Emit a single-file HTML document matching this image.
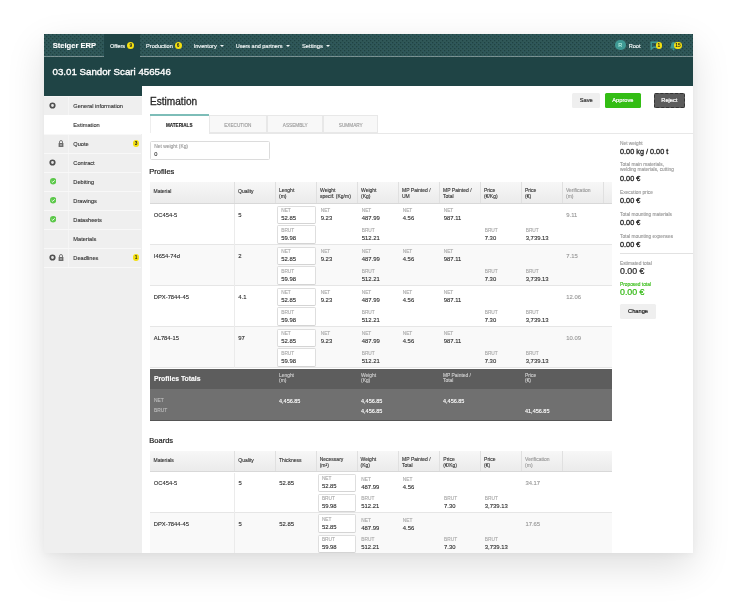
<!DOCTYPE html>
<html><head><meta charset="utf-8"><style>
html,body{margin:0;padding:0;}
body{width:738px;height:608px;overflow:hidden;background:#fff;position:relative;font-family:"Liberation Sans",sans-serif;}
.shadow{position:absolute;left:44px;top:34px;width:649px;height:519px;background:#fff;box-shadow:0 14px 36px rgba(0,0,0,0.13),0 2px 8px rgba(0,0,0,0.04);}
.app{will-change:transform;position:absolute;left:44px;top:34px;width:649px;height:519px;overflow:hidden;background:#efefef;}
.t{position:absolute;white-space:nowrap;-webkit-text-stroke:0.12px currentColor;}
.r{position:absolute;}
.bd{position:absolute;height:7px;border-radius:3.5px;background:#f4e010;color:#222;font-size:4.8px;display:flex;align-items:center;justify-content:center;font-weight:bold;}
.btn{position:absolute;-webkit-text-stroke:0.2px currentColor;border-radius:1.5px;font-size:5.7px;text-align:center;line-height:14.8px;}
</style></head><body>
<div class="shadow"></div>
<div class="app">
<svg class="r" style="left:0;top:0" width="649" height="22.6"><defs><pattern id="dp" width="4" height="4" patternUnits="userSpaceOnUse"><rect width="4" height="4" fill="#305858"/><rect x="0" y="0" width="1.3" height="1.3" fill="#1f4243"/><rect x="2" y="2" width="1.3" height="1.3" fill="#1f4243"/><rect x="3" y="1" width="0.6" height="0.6" fill="#2a5570"/></pattern></defs><rect width="649" height="22.6" fill="url(#dp)"/></svg>
<div class="r" style="left:60.30px;top:0.00px;width:35.30px;height:22.60px;background:#1f4445;"></div>
<div class="t" style="left:8.70px;top:7.44px;font-size:7.6px;line-height:9.12px;color:#fff;font-weight:bold;">Steiger ERP</div>
<div class="t" style="left:66.00px;top:8.94px;font-size:5.6px;line-height:6.72px;color:#f4f8f8;font-weight:normal;-webkit-text-stroke:0.15px #f4f8f8;">Offers</div>
<div class="bd" style="left:83.40px;top:8.10px;width:7px;height:7px;border-radius:3.5px;">9</div>
<div class="t" style="left:102.10px;top:8.94px;font-size:5.6px;line-height:6.72px;color:#f4f8f8;font-weight:normal;-webkit-text-stroke:0.15px #f4f8f8;">Production</div>
<div class="bd" style="left:130.70px;top:8.10px;width:7px;height:7px;border-radius:3.5px;">6</div>
<div class="t" style="left:149.70px;top:8.94px;font-size:5.6px;line-height:6.72px;color:#f4f8f8;font-weight:normal;-webkit-text-stroke:0.15px #f4f8f8;">Inventory</div>
<div class="r" style="left:175.90px;top:11.00px;width:0;height:0;border-left:2.1px solid transparent;border-right:2.1px solid transparent;border-top:2.3px solid #f4f8f8;"></div>
<div class="t" style="left:191.70px;top:9.00px;font-size:5.5px;line-height:6.60px;color:#f4f8f8;font-weight:normal;-webkit-text-stroke:0.15px #f4f8f8;">Users and partners</div>
<div class="r" style="left:242.40px;top:11.00px;width:0;height:0;border-left:2.1px solid transparent;border-right:2.1px solid transparent;border-top:2.3px solid #f4f8f8;"></div>
<div class="t" style="left:258.00px;top:8.85px;font-size:5.75px;line-height:6.90px;color:#f4f8f8;font-weight:normal;-webkit-text-stroke:0.15px #f4f8f8;">Settings</div>
<div class="r" style="left:281.70px;top:11.00px;width:0;height:0;border-left:2.1px solid transparent;border-right:2.1px solid transparent;border-top:2.3px solid #f4f8f8;"></div>
<div class="r" style="left:570.90px;top:5.70px;width:10.8px;height:10.8px;border-radius:50%;background:#3f9994;color:#cfe;font-size:5.5px;line-height:10.8px;text-align:center;">R</div>
<div class="t" style="left:584.70px;top:8.54px;font-size:5.6px;line-height:6.72px;color:#f4f8f8;font-weight:normal;-webkit-text-stroke:0.15px #f4f8f8;">Root</div>
<svg class="r" style="left:606px;top:7.200000000000003px" width="9" height="9" viewBox="0 0 9 9"><path d="M1.2 1.2 H7.5 V6.2 H3 L1.2 8.2 Z" fill="none" stroke="#3f9994" stroke-width="1.5"/></svg>
<div class="bd" style="left:611.60px;top:8.30px;width:6.6px;height:6.6px;border-radius:3.3px;">1</div>
<svg class="r" style="left:624.5px;top:6.5px" width="9" height="10" viewBox="0 0 9 10"><path d="M4.5 1 C2.5 1 2 3 2 5 L1 7.5 H8 L7 5 C7 3 6.5 1 4.5 1 Z" fill="#3f9994"/><circle cx="4.5" cy="8.5" r="1" fill="#3f9994"/></svg>
<div class="bd" style="left:629.80px;top:8.20px;width:8.2px;height:6.8px;border-radius:3.4px;">15</div>
<div class="r" style="left:0.00px;top:22.60px;width:649.00px;height:39.40px;background:#1f4445;"></div>
<div class="t" style="left:8.50px;top:31.56px;font-size:9.73px;line-height:11.68px;color:#fff;font-weight:normal;-webkit-text-stroke:0.35px #fff;">03.01 Sandor Scari 456546</div>
<div class="r" style="left:0.00px;top:62.00px;width:97.80px;height:457.00px;background:#efefef;"></div>
<div class="r" style="left:0.00px;top:61.80px;width:97.80px;height:1.00px;background:#f6f6f6;"></div>
<div class="r" style="left:24.20px;top:62.00px;width:0.80px;height:172.00px;background:#f5f5f5;"></div>
<div class="r" style="left:0.00px;top:80.77px;width:97.00px;height:1.00px;background:#f8f8f8;"></div>
<div class="t" style="left:29.30px;top:69.19px;font-size:5.66px;line-height:6.79px;color:#333;font-weight:normal;">General information</div>
<svg class="r" style="left:5.30px;top:68.19px" width="7" height="7" viewBox="0 0 7 7"><circle cx="3.5" cy="3.5" r="2.25" fill="#e8e8e8" stroke="#505050" stroke-width="1.7"/></svg>
<div class="r" style="left:0.00px;top:81.27px;width:97.80px;height:18.97px;background:#fff;"></div>
<div class="r" style="left:0.00px;top:99.74px;width:97.00px;height:1.00px;background:#f8f8f8;"></div>
<div class="t" style="left:29.30px;top:88.16px;font-size:5.66px;line-height:6.79px;color:#333;font-weight:normal;">Estimation</div>
<div class="r" style="left:0.00px;top:118.71px;width:97.00px;height:1.00px;background:#f8f8f8;"></div>
<div class="t" style="left:29.30px;top:107.13px;font-size:5.66px;line-height:6.79px;color:#333;font-weight:normal;">Quote</div>
<svg class="r" style="left:14.40px;top:105.83px" width="6" height="7" viewBox="0 0 6 7"><rect x="0.6" y="3" width="4.8" height="4" fill="#6c6c6c"/><path d="M1.5 3 V2 A1.5 1.5 0 0 1 4.5 2 V3" fill="none" stroke="#6c6c6c" stroke-width="0.9"/><rect x="2.5" y="4.2" width="1" height="1.5" fill="#eee"/></svg>
<div class="bd" style="left:88.75px;top:106.38px;width:6.5px;height:6.5px;border-radius:3.25px;">3</div>
<div class="r" style="left:0.00px;top:137.68px;width:97.00px;height:1.00px;background:#f8f8f8;"></div>
<div class="t" style="left:29.30px;top:126.10px;font-size:5.66px;line-height:6.79px;color:#333;font-weight:normal;">Contract</div>
<svg class="r" style="left:5.30px;top:125.09px" width="7" height="7" viewBox="0 0 7 7"><circle cx="3.5" cy="3.5" r="2.25" fill="#e8e8e8" stroke="#505050" stroke-width="1.7"/></svg>
<div class="r" style="left:0.00px;top:156.65px;width:97.00px;height:1.00px;background:#f8f8f8;"></div>
<div class="t" style="left:29.30px;top:145.07px;font-size:5.66px;line-height:6.79px;color:#333;font-weight:normal;">Debiting</div>
<svg class="r" style="left:5.80px;top:144.37px" width="6.4" height="6.4" viewBox="0 0 10 10"><circle cx="5" cy="5" r="5" fill="#5cc84a"/><path d="M2.6 5.2 L4.3 6.8 L7.4 3.6" fill="none" stroke="#fff" stroke-width="1.4"/></svg>
<div class="r" style="left:0.00px;top:175.62px;width:97.00px;height:1.00px;background:#f8f8f8;"></div>
<div class="t" style="left:29.30px;top:164.04px;font-size:5.66px;line-height:6.79px;color:#333;font-weight:normal;">Drawings</div>
<svg class="r" style="left:5.80px;top:163.34px" width="6.4" height="6.4" viewBox="0 0 10 10"><circle cx="5" cy="5" r="5" fill="#5cc84a"/><path d="M2.6 5.2 L4.3 6.8 L7.4 3.6" fill="none" stroke="#fff" stroke-width="1.4"/></svg>
<div class="r" style="left:0.00px;top:194.59px;width:97.00px;height:1.00px;background:#f8f8f8;"></div>
<div class="t" style="left:29.30px;top:183.01px;font-size:5.66px;line-height:6.79px;color:#333;font-weight:normal;">Datasheets</div>
<svg class="r" style="left:5.80px;top:182.31px" width="6.4" height="6.4" viewBox="0 0 10 10"><circle cx="5" cy="5" r="5" fill="#5cc84a"/><path d="M2.6 5.2 L4.3 6.8 L7.4 3.6" fill="none" stroke="#fff" stroke-width="1.4"/></svg>
<div class="r" style="left:0.00px;top:213.56px;width:97.00px;height:1.00px;background:#f8f8f8;"></div>
<div class="t" style="left:29.30px;top:201.98px;font-size:5.66px;line-height:6.79px;color:#333;font-weight:normal;">Materials</div>
<div class="r" style="left:0.00px;top:232.53px;width:97.00px;height:1.00px;background:#f8f8f8;"></div>
<div class="t" style="left:29.30px;top:220.95px;font-size:5.66px;line-height:6.79px;color:#333;font-weight:normal;">Deadlines</div>
<svg class="r" style="left:5.30px;top:219.94px" width="7" height="7" viewBox="0 0 7 7"><circle cx="3.5" cy="3.5" r="2.25" fill="#e8e8e8" stroke="#505050" stroke-width="1.7"/></svg>
<svg class="r" style="left:14.40px;top:219.64px" width="6" height="7" viewBox="0 0 6 7"><rect x="0.6" y="3" width="4.8" height="4" fill="#6c6c6c"/><path d="M1.5 3 V2 A1.5 1.5 0 0 1 4.5 2 V3" fill="none" stroke="#6c6c6c" stroke-width="0.9"/><rect x="2.5" y="4.2" width="1" height="1.5" fill="#eee"/></svg>
<div class="bd" style="left:88.75px;top:220.19px;width:6.5px;height:6.5px;border-radius:3.25px;">1</div>
<div class="r" style="left:97.80px;top:51.90px;width:551.20px;height:467.10px;background:#fff;"></div>
<div class="t" style="left:106.00px;top:61.74px;font-size:10.1px;line-height:12.12px;color:#2a2a2a;font-weight:normal;-webkit-text-stroke:0.3px #2a2a2a;">Estimation</div>
<div class="btn" style="left:528.3px;top:58.900000000000006px;width:28px;height:14.8px;background:#efefef;color:#333;">Save</div>
<div class="btn" style="left:560.6px;top:58.900000000000006px;width:36.6px;height:14.8px;background:#33bd14;color:#fff;">Approve</div>
<div class="btn" style="left:609.5px;top:58.900000000000006px;width:31.7px;height:14.8px;background:#5c5c5c;color:#fff;box-sizing:border-box;border:0.7px dashed #333;line-height:13.4px;">Reject</div>
<div class="r" style="left:164.50px;top:98.60px;width:484.50px;height:0.70px;background:#e8e8e8;"></div>
<div class="r" style="left:106.00px;top:81.00px;width:0.60px;height:18.00px;background:#eee;"></div>
<div class="r" style="left:106.00px;top:80.20px;width:58.50px;height:1.70px;background:#7dbdb8;"></div>
<div class="t" style="left:106px;top:88.5px;width:58.5px;text-align:center;font-size:4.6px;line-height:6px;font-weight:bold;color:#222;">MATERIALS</div>
<div class="r" style="left:164.50px;top:80.80px;width:58.70px;height:18.20px;background:#f8f8f8;border:0.6px solid #e8e8e8;box-sizing:border-box;"></div>
<div class="t" style="left:164.5px;top:88.5px;width:58.69999999999999px;text-align:center;font-size:4.7px;line-height:6px;color:#9a9a9a;">EXECUTION</div>
<div class="r" style="left:223.20px;top:80.80px;width:56.10px;height:18.20px;background:#f8f8f8;border:0.6px solid #e8e8e8;box-sizing:border-box;"></div>
<div class="t" style="left:223.2px;top:88.5px;width:56.10000000000002px;text-align:center;font-size:4.7px;line-height:6px;color:#9a9a9a;">ASSEMBLY</div>
<div class="r" style="left:279.30px;top:80.80px;width:55.00px;height:18.20px;background:#f8f8f8;border:0.6px solid #e8e8e8;box-sizing:border-box;"></div>
<div class="t" style="left:279.3px;top:88.5px;width:55.0px;text-align:center;font-size:4.7px;line-height:6px;color:#9a9a9a;">SUMMARY</div>
<div class="r" style="left:106.00px;top:107.40px;width:120.00px;height:19.00px;border:0.8px solid #dcdcdc;border-radius:1.5px;box-sizing:border-box;"></div>
<div class="t" style="left:110.30px;top:110.26px;font-size:4.9px;line-height:5.88px;color:#999;font-weight:normal;">Net weight (Kg)</div>
<div class="t" style="left:110.30px;top:117.18px;font-size:5.7px;line-height:6.84px;color:#333;font-weight:normal;">0</div>
<div class="t" style="left:576.00px;top:106.72px;font-size:4.8px;line-height:5.76px;color:#999;font-weight:normal;">Net weight</div>
<div class="t" style="left:576.00px;top:114.12px;font-size:7.3px;line-height:8.76px;color:#222;font-weight:normal;-webkit-text-stroke:0.3px currentColor;">0.00 kg / 0.00 t</div>
<div class="t" style="left:576.00px;top:127.92px;font-size:4.8px;line-height:5.76px;color:#999;font-weight:normal;">Total main materials,</div>
<div class="t" style="left:576.00px;top:133.32px;font-size:4.8px;line-height:5.76px;color:#999;font-weight:normal;">welding materials, cutting</div>
<div class="t" style="left:576.00px;top:140.72px;font-size:7.3px;line-height:8.76px;color:#222;font-weight:normal;-webkit-text-stroke:0.3px currentColor;">0.00 €</div>
<div class="t" style="left:576.00px;top:155.92px;font-size:4.8px;line-height:5.76px;color:#999;font-weight:normal;">Execution price</div>
<div class="t" style="left:576.00px;top:163.02px;font-size:7.3px;line-height:8.76px;color:#222;font-weight:normal;-webkit-text-stroke:0.3px currentColor;">0.00 €</div>
<div class="t" style="left:576.00px;top:177.72px;font-size:4.8px;line-height:5.76px;color:#999;font-weight:normal;">Total mounting materials</div>
<div class="t" style="left:576.00px;top:185.22px;font-size:7.3px;line-height:8.76px;color:#222;font-weight:normal;-webkit-text-stroke:0.3px currentColor;">0.00 €</div>
<div class="t" style="left:576.00px;top:200.12px;font-size:4.8px;line-height:5.76px;color:#999;font-weight:normal;">Total mounting expenses</div>
<div class="t" style="left:576.00px;top:207.22px;font-size:7.3px;line-height:8.76px;color:#222;font-weight:normal;-webkit-text-stroke:0.3px currentColor;">0.00 €</div>
<div class="r" style="left:576.00px;top:219.10px;width:73.00px;height:1.30px;background:#e2e2e2;"></div>
<div class="t" style="left:576.00px;top:226.62px;font-size:4.8px;line-height:5.76px;color:#999;font-weight:normal;">Estimated total</div>
<div class="t" style="left:576.00px;top:232.02px;font-size:8.8px;line-height:10.56px;color:#222;font-weight:normal;-webkit-text-stroke:0.2px #222;">0.00 €</div>
<div class="t" style="left:576.00px;top:247.62px;font-size:4.8px;line-height:5.76px;color:#33bb11;font-weight:normal;">Proposed total</div>
<div class="t" style="left:576.00px;top:253.32px;font-size:8.8px;line-height:10.56px;color:#2fb80f;font-weight:normal;-webkit-text-stroke:0.2px #2fb80f;">0.00 €</div>
<div class="btn" style="left:576px;top:269.9px;width:36px;height:14.8px;background:#efefef;color:#222;">Change</div>
<div class="t" style="left:105.30px;top:133.00px;font-size:7.5px;line-height:9.00px;color:#222;font-weight:normal;-webkit-text-stroke:0.2px #222;">Profiles</div>
<div class="r" style="left:106.00px;top:148.40px;width:462.20px;height:21.80px;background:linear-gradient(#f7f7f7,#ebebeb);border-bottom:1.2px solid #d8d8d8;box-sizing:border-box;"></div>
<div class="t" style="left:109.50px;top:153.80px;font-size:5.0px;line-height:6.00px;color:#333;font-weight:normal;">Material</div>
<div class="r" style="left:190.10px;top:148.40px;width:0.80px;height:20.80px;background:#e0e0e0;"></div>
<div class="t" style="left:194.00px;top:153.80px;font-size:5.0px;line-height:6.00px;color:#333;font-weight:normal;">Quality</div>
<div class="r" style="left:231.10px;top:148.40px;width:0.80px;height:20.80px;background:#e0e0e0;"></div>
<div class="t" style="left:235.00px;top:153.40px;font-size:5.0px;line-height:6.00px;color:#333;font-weight:normal;">Lenght</div>
<div class="t" style="left:235.00px;top:159.20px;font-size:5.0px;line-height:6.00px;color:#333;font-weight:normal;">(m)</div>
<div class="r" style="left:272.10px;top:148.40px;width:0.80px;height:20.80px;background:#e0e0e0;"></div>
<div class="t" style="left:276.00px;top:153.40px;font-size:5.0px;line-height:6.00px;color:#333;font-weight:normal;">Weight</div>
<div class="t" style="left:276.00px;top:159.20px;font-size:5.0px;line-height:6.00px;color:#333;font-weight:normal;">specif. (Kg/m)</div>
<div class="r" style="left:313.10px;top:148.40px;width:0.80px;height:20.80px;background:#e0e0e0;"></div>
<div class="t" style="left:317.00px;top:153.40px;font-size:5.0px;line-height:6.00px;color:#333;font-weight:normal;">Weight</div>
<div class="t" style="left:317.00px;top:159.20px;font-size:5.0px;line-height:6.00px;color:#333;font-weight:normal;">(Kg)</div>
<div class="r" style="left:354.10px;top:148.40px;width:0.80px;height:20.80px;background:#e0e0e0;"></div>
<div class="t" style="left:358.00px;top:153.40px;font-size:5.0px;line-height:6.00px;color:#333;font-weight:normal;">MP Painted /</div>
<div class="t" style="left:358.00px;top:159.20px;font-size:5.0px;line-height:6.00px;color:#333;font-weight:normal;">UM</div>
<div class="r" style="left:395.10px;top:148.40px;width:0.80px;height:20.80px;background:#e0e0e0;"></div>
<div class="t" style="left:399.00px;top:153.40px;font-size:5.0px;line-height:6.00px;color:#333;font-weight:normal;">MP Painted /</div>
<div class="t" style="left:399.00px;top:159.20px;font-size:5.0px;line-height:6.00px;color:#333;font-weight:normal;">Total</div>
<div class="r" style="left:436.10px;top:148.40px;width:0.80px;height:20.80px;background:#e0e0e0;"></div>
<div class="t" style="left:440.00px;top:153.40px;font-size:5.0px;line-height:6.00px;color:#333;font-weight:normal;">Price</div>
<div class="t" style="left:440.00px;top:159.20px;font-size:5.0px;line-height:6.00px;color:#333;font-weight:normal;">(€/Kg)</div>
<div class="r" style="left:477.10px;top:148.40px;width:0.80px;height:20.80px;background:#e0e0e0;"></div>
<div class="t" style="left:481.00px;top:153.40px;font-size:5.0px;line-height:6.00px;color:#333;font-weight:normal;">Price</div>
<div class="t" style="left:481.00px;top:159.20px;font-size:5.0px;line-height:6.00px;color:#333;font-weight:normal;">(€)</div>
<div class="r" style="left:518.10px;top:148.40px;width:0.80px;height:20.80px;background:#e0e0e0;"></div>
<div class="t" style="left:522.00px;top:153.40px;font-size:5.0px;line-height:6.00px;color:#999;font-weight:normal;">Verification</div>
<div class="t" style="left:522.00px;top:159.20px;font-size:5.0px;line-height:6.00px;color:#999;font-weight:normal;">(m)</div>
<div class="r" style="left:559.10px;top:148.40px;width:0.80px;height:20.80px;background:#e0e0e0;"></div>
<div class="t" style="left:563.00px;top:153.80px;font-size:5.0px;line-height:6.00px;color:#333;font-weight:normal;"></div>
<div class="r" style="left:106.00px;top:170.20px;width:462.20px;height:41.00px;background:#fff;border-bottom:0.8px solid #e6e6e6;box-sizing:border-box;"></div>
<div class="r" style="left:190.15px;top:170.20px;width:0.70px;height:41.00px;background:#ebebeb;"></div>
<div class="t" style="left:109.80px;top:178.22px;font-size:5.8px;line-height:6.96px;color:#303030;font-weight:normal;">OC454-5</div>
<div class="t" style="left:194.30px;top:178.16px;font-size:5.9px;line-height:7.08px;color:#303030;font-weight:normal;">5</div>
<div class="r" style="left:232.80px;top:171.50px;width:38.80px;height:18.30px;background:#fff;border:0.8px solid #dedede;border-bottom-color:#d4d4d4;border-radius:1.8px;box-sizing:border-box;"></div>
<div class="r" style="left:232.80px;top:191.20px;width:38.80px;height:18.60px;background:#fff;border:0.8px solid #dedede;border-bottom-color:#d4d4d4;border-radius:1.8px;box-sizing:border-box;"></div>
<div class="t" style="left:237.20px;top:173.92px;font-size:4.8px;line-height:5.76px;color:#aaa;font-weight:normal;">NET</div>
<div class="t" style="left:237.20px;top:180.96px;font-size:5.9px;line-height:7.08px;color:#303030;font-weight:normal;">52.85</div>
<div class="t" style="left:237.20px;top:193.62px;font-size:4.8px;line-height:5.76px;color:#aaa;font-weight:normal;">BRUT</div>
<div class="t" style="left:237.20px;top:200.76px;font-size:5.9px;line-height:7.08px;color:#303030;font-weight:normal;">59.98</div>
<div class="t" style="left:276.70px;top:173.92px;font-size:4.8px;line-height:5.76px;color:#aaa;font-weight:normal;">NET</div>
<div class="t" style="left:276.70px;top:180.96px;font-size:5.9px;line-height:7.08px;color:#303030;font-weight:normal;">9.23</div>
<div class="t" style="left:317.70px;top:173.92px;font-size:4.8px;line-height:5.76px;color:#aaa;font-weight:normal;">NET</div>
<div class="t" style="left:317.70px;top:180.96px;font-size:5.9px;line-height:7.08px;color:#303030;font-weight:normal;">487.99</div>
<div class="t" style="left:317.70px;top:193.62px;font-size:4.8px;line-height:5.76px;color:#aaa;font-weight:normal;">BRUT</div>
<div class="t" style="left:317.70px;top:200.76px;font-size:5.9px;line-height:7.08px;color:#303030;font-weight:normal;">512.21</div>
<div class="t" style="left:358.70px;top:173.92px;font-size:4.8px;line-height:5.76px;color:#aaa;font-weight:normal;">NET</div>
<div class="t" style="left:358.70px;top:180.96px;font-size:5.9px;line-height:7.08px;color:#303030;font-weight:normal;">4.56</div>
<div class="t" style="left:399.70px;top:173.92px;font-size:4.8px;line-height:5.76px;color:#aaa;font-weight:normal;">NET</div>
<div class="t" style="left:399.70px;top:180.96px;font-size:5.9px;line-height:7.08px;color:#303030;font-weight:normal;">987.11</div>
<div class="t" style="left:440.70px;top:193.62px;font-size:4.8px;line-height:5.76px;color:#aaa;font-weight:normal;">BRUT</div>
<div class="t" style="left:440.70px;top:200.76px;font-size:5.9px;line-height:7.08px;color:#303030;font-weight:normal;">7.30</div>
<div class="t" style="left:481.70px;top:193.62px;font-size:4.8px;line-height:5.76px;color:#aaa;font-weight:normal;">BRUT</div>
<div class="t" style="left:481.70px;top:200.76px;font-size:5.9px;line-height:7.08px;color:#303030;font-weight:normal;">3,739.13</div>
<div class="t" style="left:522.30px;top:178.16px;font-size:5.9px;line-height:7.08px;color:#999;font-weight:normal;">9.11</div>
<div class="r" style="left:106.00px;top:211.20px;width:462.20px;height:41.00px;background:#f9f9f9;border-bottom:0.8px solid #e6e6e6;box-sizing:border-box;"></div>
<div class="r" style="left:190.15px;top:211.20px;width:0.70px;height:41.00px;background:#ebebeb;"></div>
<div class="t" style="left:109.80px;top:219.22px;font-size:5.8px;line-height:6.96px;color:#303030;font-weight:normal;">I4654-74d</div>
<div class="t" style="left:194.30px;top:219.16px;font-size:5.9px;line-height:7.08px;color:#303030;font-weight:normal;">2</div>
<div class="r" style="left:232.80px;top:212.50px;width:38.80px;height:18.30px;background:#fff;border:0.8px solid #dedede;border-bottom-color:#d4d4d4;border-radius:1.8px;box-sizing:border-box;"></div>
<div class="r" style="left:232.80px;top:232.20px;width:38.80px;height:18.60px;background:#fff;border:0.8px solid #dedede;border-bottom-color:#d4d4d4;border-radius:1.8px;box-sizing:border-box;"></div>
<div class="t" style="left:237.20px;top:214.92px;font-size:4.8px;line-height:5.76px;color:#aaa;font-weight:normal;">NET</div>
<div class="t" style="left:237.20px;top:221.96px;font-size:5.9px;line-height:7.08px;color:#303030;font-weight:normal;">52.85</div>
<div class="t" style="left:237.20px;top:234.62px;font-size:4.8px;line-height:5.76px;color:#aaa;font-weight:normal;">BRUT</div>
<div class="t" style="left:237.20px;top:241.76px;font-size:5.9px;line-height:7.08px;color:#303030;font-weight:normal;">59.98</div>
<div class="t" style="left:276.70px;top:214.92px;font-size:4.8px;line-height:5.76px;color:#aaa;font-weight:normal;">NET</div>
<div class="t" style="left:276.70px;top:221.96px;font-size:5.9px;line-height:7.08px;color:#303030;font-weight:normal;">9.23</div>
<div class="t" style="left:317.70px;top:214.92px;font-size:4.8px;line-height:5.76px;color:#aaa;font-weight:normal;">NET</div>
<div class="t" style="left:317.70px;top:221.96px;font-size:5.9px;line-height:7.08px;color:#303030;font-weight:normal;">487.99</div>
<div class="t" style="left:317.70px;top:234.62px;font-size:4.8px;line-height:5.76px;color:#aaa;font-weight:normal;">BRUT</div>
<div class="t" style="left:317.70px;top:241.76px;font-size:5.9px;line-height:7.08px;color:#303030;font-weight:normal;">512.21</div>
<div class="t" style="left:358.70px;top:214.92px;font-size:4.8px;line-height:5.76px;color:#aaa;font-weight:normal;">NET</div>
<div class="t" style="left:358.70px;top:221.96px;font-size:5.9px;line-height:7.08px;color:#303030;font-weight:normal;">4.56</div>
<div class="t" style="left:399.70px;top:214.92px;font-size:4.8px;line-height:5.76px;color:#aaa;font-weight:normal;">NET</div>
<div class="t" style="left:399.70px;top:221.96px;font-size:5.9px;line-height:7.08px;color:#303030;font-weight:normal;">987.11</div>
<div class="t" style="left:440.70px;top:234.62px;font-size:4.8px;line-height:5.76px;color:#aaa;font-weight:normal;">BRUT</div>
<div class="t" style="left:440.70px;top:241.76px;font-size:5.9px;line-height:7.08px;color:#303030;font-weight:normal;">7.30</div>
<div class="t" style="left:481.70px;top:234.62px;font-size:4.8px;line-height:5.76px;color:#aaa;font-weight:normal;">BRUT</div>
<div class="t" style="left:481.70px;top:241.76px;font-size:5.9px;line-height:7.08px;color:#303030;font-weight:normal;">3,739.13</div>
<div class="t" style="left:522.30px;top:219.16px;font-size:5.9px;line-height:7.08px;color:#999;font-weight:normal;">7.15</div>
<div class="r" style="left:106.00px;top:252.20px;width:462.20px;height:41.00px;background:#fff;border-bottom:0.8px solid #e6e6e6;box-sizing:border-box;"></div>
<div class="r" style="left:190.15px;top:252.20px;width:0.70px;height:41.00px;background:#ebebeb;"></div>
<div class="t" style="left:109.80px;top:260.22px;font-size:5.8px;line-height:6.96px;color:#303030;font-weight:normal;">DPX-7844-45</div>
<div class="t" style="left:194.30px;top:260.16px;font-size:5.9px;line-height:7.08px;color:#303030;font-weight:normal;">4.1</div>
<div class="r" style="left:232.80px;top:253.50px;width:38.80px;height:18.30px;background:#fff;border:0.8px solid #dedede;border-bottom-color:#d4d4d4;border-radius:1.8px;box-sizing:border-box;"></div>
<div class="r" style="left:232.80px;top:273.20px;width:38.80px;height:18.60px;background:#fff;border:0.8px solid #dedede;border-bottom-color:#d4d4d4;border-radius:1.8px;box-sizing:border-box;"></div>
<div class="t" style="left:237.20px;top:255.92px;font-size:4.8px;line-height:5.76px;color:#aaa;font-weight:normal;">NET</div>
<div class="t" style="left:237.20px;top:262.96px;font-size:5.9px;line-height:7.08px;color:#303030;font-weight:normal;">52.85</div>
<div class="t" style="left:237.20px;top:275.62px;font-size:4.8px;line-height:5.76px;color:#aaa;font-weight:normal;">BRUT</div>
<div class="t" style="left:237.20px;top:282.76px;font-size:5.9px;line-height:7.08px;color:#303030;font-weight:normal;">59.98</div>
<div class="t" style="left:276.70px;top:255.92px;font-size:4.8px;line-height:5.76px;color:#aaa;font-weight:normal;">NET</div>
<div class="t" style="left:276.70px;top:262.96px;font-size:5.9px;line-height:7.08px;color:#303030;font-weight:normal;">9.23</div>
<div class="t" style="left:317.70px;top:255.92px;font-size:4.8px;line-height:5.76px;color:#aaa;font-weight:normal;">NET</div>
<div class="t" style="left:317.70px;top:262.96px;font-size:5.9px;line-height:7.08px;color:#303030;font-weight:normal;">487.99</div>
<div class="t" style="left:317.70px;top:275.62px;font-size:4.8px;line-height:5.76px;color:#aaa;font-weight:normal;">BRUT</div>
<div class="t" style="left:317.70px;top:282.76px;font-size:5.9px;line-height:7.08px;color:#303030;font-weight:normal;">512.21</div>
<div class="t" style="left:358.70px;top:255.92px;font-size:4.8px;line-height:5.76px;color:#aaa;font-weight:normal;">NET</div>
<div class="t" style="left:358.70px;top:262.96px;font-size:5.9px;line-height:7.08px;color:#303030;font-weight:normal;">4.56</div>
<div class="t" style="left:399.70px;top:255.92px;font-size:4.8px;line-height:5.76px;color:#aaa;font-weight:normal;">NET</div>
<div class="t" style="left:399.70px;top:262.96px;font-size:5.9px;line-height:7.08px;color:#303030;font-weight:normal;">987.11</div>
<div class="t" style="left:440.70px;top:275.62px;font-size:4.8px;line-height:5.76px;color:#aaa;font-weight:normal;">BRUT</div>
<div class="t" style="left:440.70px;top:282.76px;font-size:5.9px;line-height:7.08px;color:#303030;font-weight:normal;">7.30</div>
<div class="t" style="left:481.70px;top:275.62px;font-size:4.8px;line-height:5.76px;color:#aaa;font-weight:normal;">BRUT</div>
<div class="t" style="left:481.70px;top:282.76px;font-size:5.9px;line-height:7.08px;color:#303030;font-weight:normal;">3,739.13</div>
<div class="t" style="left:522.30px;top:260.16px;font-size:5.9px;line-height:7.08px;color:#999;font-weight:normal;">12.06</div>
<div class="r" style="left:106.00px;top:293.20px;width:462.20px;height:41.00px;background:#f9f9f9;border-bottom:0.8px solid #e6e6e6;box-sizing:border-box;"></div>
<div class="r" style="left:190.15px;top:293.20px;width:0.70px;height:41.00px;background:#ebebeb;"></div>
<div class="t" style="left:109.80px;top:301.22px;font-size:5.8px;line-height:6.96px;color:#303030;font-weight:normal;">AL784-15</div>
<div class="t" style="left:194.30px;top:301.16px;font-size:5.9px;line-height:7.08px;color:#303030;font-weight:normal;">97</div>
<div class="r" style="left:232.80px;top:294.50px;width:38.80px;height:18.30px;background:#fff;border:0.8px solid #dedede;border-bottom-color:#d4d4d4;border-radius:1.8px;box-sizing:border-box;"></div>
<div class="r" style="left:232.80px;top:314.20px;width:38.80px;height:18.60px;background:#fff;border:0.8px solid #dedede;border-bottom-color:#d4d4d4;border-radius:1.8px;box-sizing:border-box;"></div>
<div class="t" style="left:237.20px;top:296.92px;font-size:4.8px;line-height:5.76px;color:#aaa;font-weight:normal;">NET</div>
<div class="t" style="left:237.20px;top:303.96px;font-size:5.9px;line-height:7.08px;color:#303030;font-weight:normal;">52.85</div>
<div class="t" style="left:237.20px;top:316.62px;font-size:4.8px;line-height:5.76px;color:#aaa;font-weight:normal;">BRUT</div>
<div class="t" style="left:237.20px;top:323.76px;font-size:5.9px;line-height:7.08px;color:#303030;font-weight:normal;">59.98</div>
<div class="t" style="left:276.70px;top:296.92px;font-size:4.8px;line-height:5.76px;color:#aaa;font-weight:normal;">NET</div>
<div class="t" style="left:276.70px;top:303.96px;font-size:5.9px;line-height:7.08px;color:#303030;font-weight:normal;">9.23</div>
<div class="t" style="left:317.70px;top:296.92px;font-size:4.8px;line-height:5.76px;color:#aaa;font-weight:normal;">NET</div>
<div class="t" style="left:317.70px;top:303.96px;font-size:5.9px;line-height:7.08px;color:#303030;font-weight:normal;">487.99</div>
<div class="t" style="left:317.70px;top:316.62px;font-size:4.8px;line-height:5.76px;color:#aaa;font-weight:normal;">BRUT</div>
<div class="t" style="left:317.70px;top:323.76px;font-size:5.9px;line-height:7.08px;color:#303030;font-weight:normal;">512.21</div>
<div class="t" style="left:358.70px;top:296.92px;font-size:4.8px;line-height:5.76px;color:#aaa;font-weight:normal;">NET</div>
<div class="t" style="left:358.70px;top:303.96px;font-size:5.9px;line-height:7.08px;color:#303030;font-weight:normal;">4.56</div>
<div class="t" style="left:399.70px;top:296.92px;font-size:4.8px;line-height:5.76px;color:#aaa;font-weight:normal;">NET</div>
<div class="t" style="left:399.70px;top:303.96px;font-size:5.9px;line-height:7.08px;color:#303030;font-weight:normal;">987.11</div>
<div class="t" style="left:440.70px;top:316.62px;font-size:4.8px;line-height:5.76px;color:#aaa;font-weight:normal;">BRUT</div>
<div class="t" style="left:440.70px;top:323.76px;font-size:5.9px;line-height:7.08px;color:#303030;font-weight:normal;">7.30</div>
<div class="t" style="left:481.70px;top:316.62px;font-size:4.8px;line-height:5.76px;color:#aaa;font-weight:normal;">BRUT</div>
<div class="t" style="left:481.70px;top:323.76px;font-size:5.9px;line-height:7.08px;color:#303030;font-weight:normal;">3,739.13</div>
<div class="t" style="left:522.30px;top:301.16px;font-size:5.9px;line-height:7.08px;color:#999;font-weight:normal;">10.09</div>
<div class="r" style="left:106.00px;top:334.60px;width:462.20px;height:20.80px;background:#5d5d5d;"></div>
<div class="r" style="left:106.00px;top:355.40px;width:462.20px;height:31.20px;background:#707070;border-bottom:0.8px solid #555;box-sizing:border-box;"></div>
<div class="t" style="left:109.90px;top:341.09px;font-size:6.85px;line-height:8.22px;color:#fff;font-weight:bold;">Profiles Totals</div>
<div class="t" style="left:235.00px;top:338.66px;font-size:4.9px;line-height:5.88px;color:#d0d0d0;font-weight:normal;">Lenght</div>
<div class="t" style="left:235.00px;top:344.46px;font-size:4.9px;line-height:5.88px;color:#d0d0d0;font-weight:normal;">(m)</div>
<div class="t" style="left:317.00px;top:338.66px;font-size:4.9px;line-height:5.88px;color:#d0d0d0;font-weight:normal;">Weight</div>
<div class="t" style="left:317.00px;top:344.46px;font-size:4.9px;line-height:5.88px;color:#d0d0d0;font-weight:normal;">(Kg)</div>
<div class="t" style="left:399.00px;top:338.66px;font-size:4.9px;line-height:5.88px;color:#d0d0d0;font-weight:normal;">MP Painted /</div>
<div class="t" style="left:399.00px;top:344.46px;font-size:4.9px;line-height:5.88px;color:#d0d0d0;font-weight:normal;">Total</div>
<div class="t" style="left:481.00px;top:338.66px;font-size:4.9px;line-height:5.88px;color:#d0d0d0;font-weight:normal;">Price</div>
<div class="t" style="left:481.00px;top:344.46px;font-size:4.9px;line-height:5.88px;color:#d0d0d0;font-weight:normal;">(€)</div>
<div class="t" style="left:110.00px;top:363.96px;font-size:4.9px;line-height:5.88px;color:#bdbdbd;font-weight:normal;">NET</div>
<div class="t" style="left:110.00px;top:374.36px;font-size:4.9px;line-height:5.88px;color:#bdbdbd;font-weight:normal;">BRUT</div>
<div class="t" style="left:235.00px;top:363.60px;font-size:5.5px;line-height:6.60px;color:#fff;font-weight:normal;">4,456.85</div>
<div class="t" style="left:317.00px;top:363.60px;font-size:5.5px;line-height:6.60px;color:#fff;font-weight:normal;">4,456.85</div>
<div class="t" style="left:317.00px;top:374.00px;font-size:5.5px;line-height:6.60px;color:#fff;font-weight:normal;">4,456.85</div>
<div class="t" style="left:399.00px;top:363.60px;font-size:5.5px;line-height:6.60px;color:#fff;font-weight:normal;">4,456.85</div>
<div class="t" style="left:481.00px;top:374.00px;font-size:5.5px;line-height:6.60px;color:#fff;font-weight:normal;">41,456.85</div>
<div class="t" style="left:105.30px;top:401.50px;font-size:7.5px;line-height:9.00px;color:#222;font-weight:normal;-webkit-text-stroke:0.2px #222;">Boards</div>
<div class="r" style="left:106.00px;top:417.20px;width:462.20px;height:21.30px;background:linear-gradient(#f7f7f7,#ebebeb);border-bottom:1.2px solid #d8d8d8;box-sizing:border-box;"></div>
<div class="t" style="left:109.50px;top:422.60px;font-size:5.0px;line-height:6.00px;color:#333;font-weight:normal;">Materials</div>
<div class="r" style="left:190.40px;top:417.20px;width:0.80px;height:20.30px;background:#e0e0e0;"></div>
<div class="t" style="left:194.30px;top:422.60px;font-size:5.0px;line-height:6.00px;color:#333;font-weight:normal;">Quality</div>
<div class="r" style="left:231.10px;top:417.20px;width:0.80px;height:20.30px;background:#e0e0e0;"></div>
<div class="t" style="left:235.00px;top:422.60px;font-size:5.0px;line-height:6.00px;color:#333;font-weight:normal;">Thickness</div>
<div class="r" style="left:271.80px;top:417.20px;width:0.80px;height:20.30px;background:#e0e0e0;"></div>
<div class="t" style="left:275.70px;top:422.20px;font-size:5.0px;line-height:6.00px;color:#333;font-weight:normal;">Necessary</div>
<div class="t" style="left:275.70px;top:428.00px;font-size:5.0px;line-height:6.00px;color:#333;font-weight:normal;">(m²)</div>
<div class="r" style="left:312.70px;top:417.20px;width:0.80px;height:20.30px;background:#e0e0e0;"></div>
<div class="t" style="left:316.60px;top:422.20px;font-size:5.0px;line-height:6.00px;color:#333;font-weight:normal;">Weight</div>
<div class="t" style="left:316.60px;top:428.00px;font-size:5.0px;line-height:6.00px;color:#333;font-weight:normal;">(Kg)</div>
<div class="r" style="left:354.20px;top:417.20px;width:0.80px;height:20.30px;background:#e0e0e0;"></div>
<div class="t" style="left:358.10px;top:422.20px;font-size:5.0px;line-height:6.00px;color:#333;font-weight:normal;">MP Painted /</div>
<div class="t" style="left:358.10px;top:428.00px;font-size:5.0px;line-height:6.00px;color:#333;font-weight:normal;">Total</div>
<div class="r" style="left:395.40px;top:417.20px;width:0.80px;height:20.30px;background:#e0e0e0;"></div>
<div class="t" style="left:399.30px;top:422.20px;font-size:5.0px;line-height:6.00px;color:#333;font-weight:normal;">Price</div>
<div class="t" style="left:399.30px;top:428.00px;font-size:5.0px;line-height:6.00px;color:#333;font-weight:normal;">(€/Kg)</div>
<div class="r" style="left:436.20px;top:417.20px;width:0.80px;height:20.30px;background:#e0e0e0;"></div>
<div class="t" style="left:440.10px;top:422.20px;font-size:5.0px;line-height:6.00px;color:#333;font-weight:normal;">Price</div>
<div class="t" style="left:440.10px;top:428.00px;font-size:5.0px;line-height:6.00px;color:#333;font-weight:normal;">(€)</div>
<div class="r" style="left:477.20px;top:417.20px;width:0.80px;height:20.30px;background:#e0e0e0;"></div>
<div class="t" style="left:481.10px;top:422.20px;font-size:5.0px;line-height:6.00px;color:#999;font-weight:normal;">Verification</div>
<div class="t" style="left:481.10px;top:428.00px;font-size:5.0px;line-height:6.00px;color:#999;font-weight:normal;">(m)</div>
<div class="r" style="left:517.90px;top:417.20px;width:0.80px;height:20.30px;background:#e0e0e0;"></div>
<div class="t" style="left:521.80px;top:422.60px;font-size:5.0px;line-height:6.00px;color:#333;font-weight:normal;"></div>
<div class="r" style="left:106.00px;top:438.50px;width:462.20px;height:40.70px;background:#fff;border-bottom:0.8px solid #e6e6e6;box-sizing:border-box;"></div>
<div class="r" style="left:190.45px;top:438.50px;width:0.70px;height:40.70px;background:#ebebeb;"></div>
<div class="t" style="left:109.80px;top:446.02px;font-size:5.8px;line-height:6.96px;color:#303030;font-weight:normal;">OC454-5</div>
<div class="t" style="left:194.60px;top:445.96px;font-size:5.9px;line-height:7.08px;color:#303030;font-weight:normal;">5</div>
<div class="t" style="left:235.30px;top:445.96px;font-size:5.9px;line-height:7.08px;color:#303030;font-weight:normal;">52.85</div>
<div class="r" style="left:273.50px;top:439.50px;width:38.80px;height:18.70px;background:#fff;border:0.8px solid #dedede;border-bottom-color:#d4d4d4;border-radius:1.8px;box-sizing:border-box;"></div>
<div class="r" style="left:273.50px;top:459.80px;width:38.80px;height:18.30px;background:#fff;border:0.8px solid #dedede;border-bottom-color:#d4d4d4;border-radius:1.8px;box-sizing:border-box;"></div>
<div class="t" style="left:277.90px;top:442.22px;font-size:4.8px;line-height:5.76px;color:#aaa;font-weight:normal;">NET</div>
<div class="t" style="left:277.90px;top:449.26px;font-size:5.9px;line-height:7.08px;color:#303030;font-weight:normal;">52.85</div>
<div class="t" style="left:277.90px;top:461.92px;font-size:4.8px;line-height:5.76px;color:#aaa;font-weight:normal;">BRUT</div>
<div class="t" style="left:277.90px;top:469.06px;font-size:5.9px;line-height:7.08px;color:#303030;font-weight:normal;">59.98</div>
<div class="t" style="left:317.30px;top:443.02px;font-size:4.8px;line-height:5.76px;color:#aaa;font-weight:normal;">NET</div>
<div class="t" style="left:317.30px;top:449.82px;font-size:5.9px;line-height:7.08px;color:#303030;font-weight:normal;">487.99</div>
<div class="t" style="left:317.30px;top:461.92px;font-size:4.8px;line-height:5.76px;color:#aaa;font-weight:normal;">BRUT</div>
<div class="t" style="left:317.30px;top:469.06px;font-size:5.9px;line-height:7.08px;color:#303030;font-weight:normal;">512.21</div>
<div class="t" style="left:358.80px;top:443.02px;font-size:4.8px;line-height:5.76px;color:#aaa;font-weight:normal;">NET</div>
<div class="t" style="left:358.80px;top:449.82px;font-size:5.9px;line-height:7.08px;color:#303030;font-weight:normal;">4.56</div>
<div class="t" style="left:400.00px;top:461.92px;font-size:4.8px;line-height:5.76px;color:#aaa;font-weight:normal;">BRUT</div>
<div class="t" style="left:400.00px;top:469.06px;font-size:5.9px;line-height:7.08px;color:#303030;font-weight:normal;">7.30</div>
<div class="t" style="left:440.80px;top:461.92px;font-size:4.8px;line-height:5.76px;color:#aaa;font-weight:normal;">BRUT</div>
<div class="t" style="left:440.80px;top:469.06px;font-size:5.9px;line-height:7.08px;color:#303030;font-weight:normal;">3,739.13</div>
<div class="t" style="left:481.40px;top:445.96px;font-size:5.9px;line-height:7.08px;color:#999;font-weight:normal;">34.17</div>
<div class="r" style="left:106.00px;top:479.20px;width:462.20px;height:40.70px;background:#f9f9f9;border-bottom:0.8px solid #e6e6e6;box-sizing:border-box;"></div>
<div class="r" style="left:190.45px;top:479.20px;width:0.70px;height:40.70px;background:#ebebeb;"></div>
<div class="t" style="left:109.80px;top:486.72px;font-size:5.8px;line-height:6.96px;color:#303030;font-weight:normal;">DPX-7844-45</div>
<div class="t" style="left:194.60px;top:486.66px;font-size:5.9px;line-height:7.08px;color:#303030;font-weight:normal;">5</div>
<div class="t" style="left:235.30px;top:486.66px;font-size:5.9px;line-height:7.08px;color:#303030;font-weight:normal;">52.85</div>
<div class="r" style="left:273.50px;top:480.20px;width:38.80px;height:18.70px;background:#fff;border:0.8px solid #dedede;border-bottom-color:#d4d4d4;border-radius:1.8px;box-sizing:border-box;"></div>
<div class="r" style="left:273.50px;top:500.50px;width:38.80px;height:18.30px;background:#fff;border:0.8px solid #dedede;border-bottom-color:#d4d4d4;border-radius:1.8px;box-sizing:border-box;"></div>
<div class="t" style="left:277.90px;top:482.92px;font-size:4.8px;line-height:5.76px;color:#aaa;font-weight:normal;">NET</div>
<div class="t" style="left:277.90px;top:489.96px;font-size:5.9px;line-height:7.08px;color:#303030;font-weight:normal;">52.85</div>
<div class="t" style="left:277.90px;top:502.62px;font-size:4.8px;line-height:5.76px;color:#aaa;font-weight:normal;">BRUT</div>
<div class="t" style="left:277.90px;top:509.76px;font-size:5.9px;line-height:7.08px;color:#303030;font-weight:normal;">59.98</div>
<div class="t" style="left:317.30px;top:483.72px;font-size:4.8px;line-height:5.76px;color:#aaa;font-weight:normal;">NET</div>
<div class="t" style="left:317.30px;top:490.52px;font-size:5.9px;line-height:7.08px;color:#303030;font-weight:normal;">487.99</div>
<div class="t" style="left:317.30px;top:502.62px;font-size:4.8px;line-height:5.76px;color:#aaa;font-weight:normal;">BRUT</div>
<div class="t" style="left:317.30px;top:509.76px;font-size:5.9px;line-height:7.08px;color:#303030;font-weight:normal;">512.21</div>
<div class="t" style="left:358.80px;top:483.72px;font-size:4.8px;line-height:5.76px;color:#aaa;font-weight:normal;">NET</div>
<div class="t" style="left:358.80px;top:490.52px;font-size:5.9px;line-height:7.08px;color:#303030;font-weight:normal;">4.56</div>
<div class="t" style="left:400.00px;top:502.62px;font-size:4.8px;line-height:5.76px;color:#aaa;font-weight:normal;">BRUT</div>
<div class="t" style="left:400.00px;top:509.76px;font-size:5.9px;line-height:7.08px;color:#303030;font-weight:normal;">7.30</div>
<div class="t" style="left:440.80px;top:502.62px;font-size:4.8px;line-height:5.76px;color:#aaa;font-weight:normal;">BRUT</div>
<div class="t" style="left:440.80px;top:509.76px;font-size:5.9px;line-height:7.08px;color:#303030;font-weight:normal;">3,739.13</div>
<div class="t" style="left:481.40px;top:486.66px;font-size:5.9px;line-height:7.08px;color:#999;font-weight:normal;">17.65</div>
</div>
</body></html>
